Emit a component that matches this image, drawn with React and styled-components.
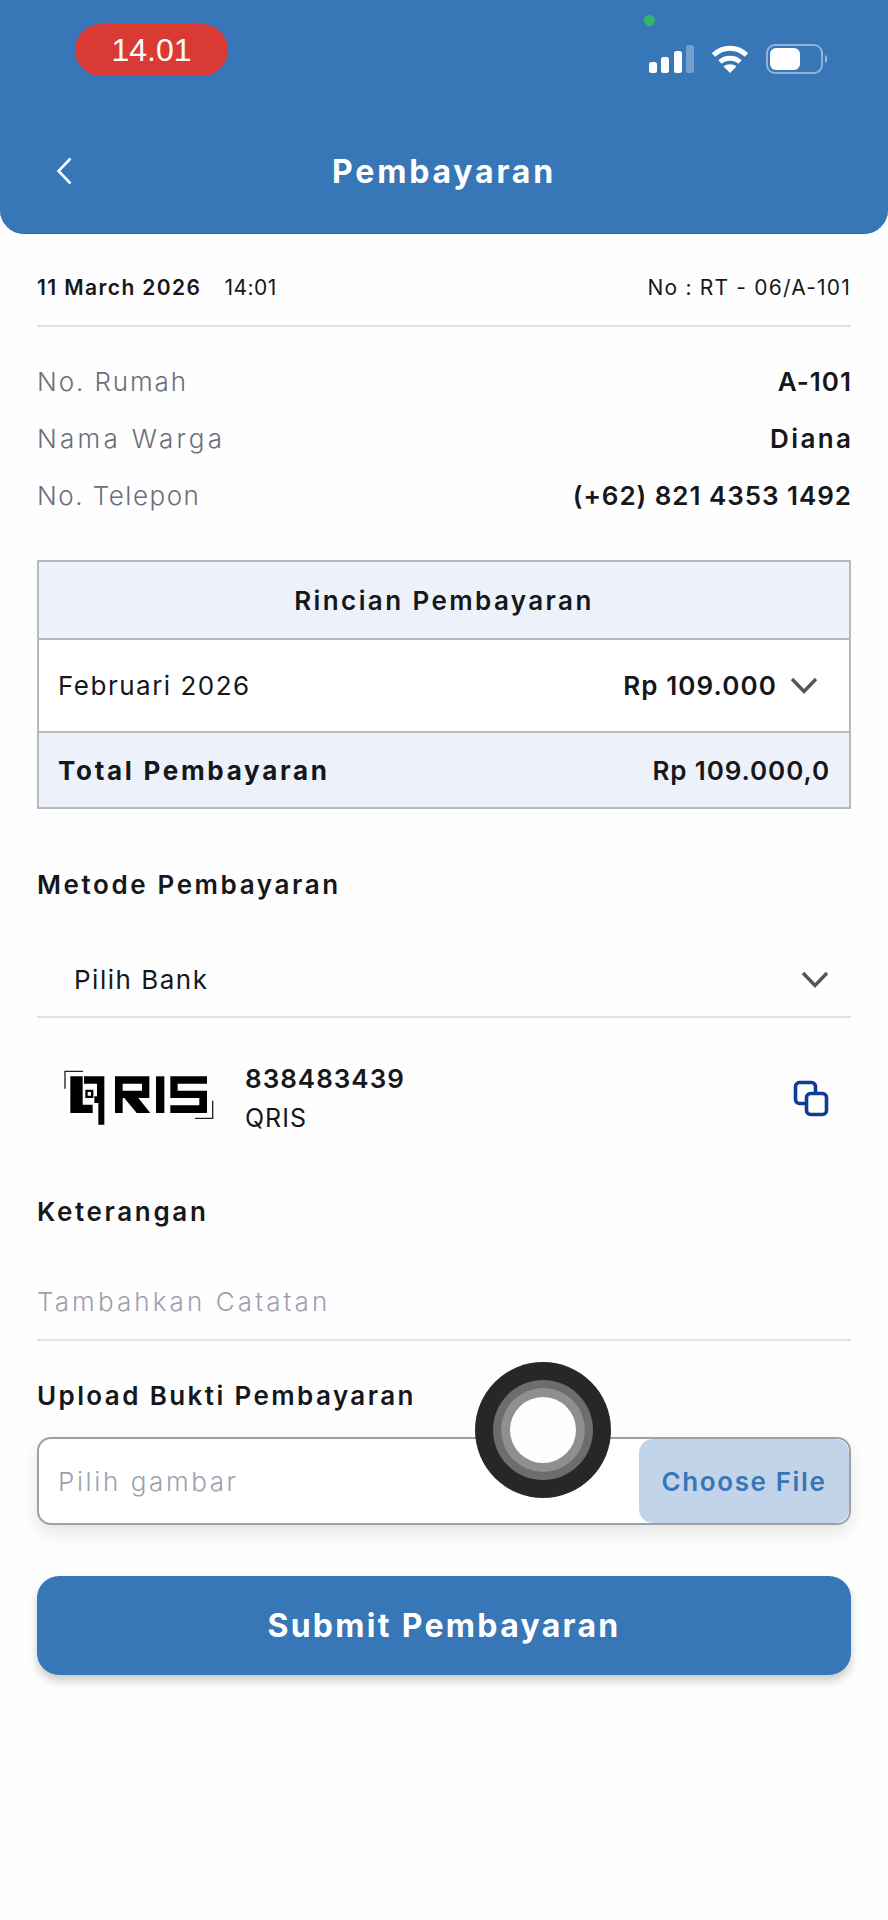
import React from 'react'
import styled, { createGlobalStyle } from 'styled-components'

const GlobalStyle = createGlobalStyle`
  html, body {
    margin: 0;
    padding: 0;
    background: #fefefe;
  }
  * {
    box-sizing: border-box;
  }
`

const Page = styled.div`
  position: relative;
  width: 888px;
  min-height: 1920px;
  background: #fefefe;
  color: #16171b;
  font-family: Inter, 'Noto Sans', sans-serif;
  overflow: hidden;
`

const Header = styled.header`
  position: relative;
  height: 234px;
  padding-top: 24px;
  background: #3776b7;
  border-bottom: 1px solid #1f6cb4;
  border-radius: 0 0 24px 24px;
  color: #fff;
`

const StatusBar = styled.div`
  display: flex;
  justify-content: space-between;
  align-items: flex-start;
  height: 52px;
  padding: 0 59px 0 75px;
`

const TimePill = styled.div`
  width: 153px;
  height: 52px;
  border-radius: 26px;
  background: #da3a34;
  display: flex;
  align-items: center;
  justify-content: center;
  font-family: 'Liberation Sans', Arial, sans-serif;
  font-size: 32px;
`

const StatusIcons = styled.div`
  display: flex;
  gap: 17px;
  margin-top: 20px;
`

const CameraDot = styled.span`
  position: absolute;
  left: 644px;
  top: 15px;
  width: 11px;
  height: 11px;
  border-radius: 50%;
  background: #34b56b;
`

const TitleRow = styled.div`
  display: grid;
  grid-template-columns: 1fr auto 1fr;
  align-items: center;
  height: 48px;
  margin-top: 71px;
`

const BackSlot = styled.div`
  display: flex;
  padding-left: 56px;
`

const Title = styled.h1`
  margin: 0;
  font-size: 32px;
  font-weight: 700;
  letter-spacing: 2.8px;
`

const Main = styled.main`
  padding: 0 37px;
`

const DateRow = styled.div`
  display: flex;
  align-items: center;
  height: 58px;
  margin-top: 35px;
  padding-bottom: 19px;
  border-bottom: 2px solid #e2e2e6;
  font-size: 21px;
`

const DateText = styled.span`
  font-weight: 600;
  letter-spacing: 1.4px;
  margin-right: 23px;
`

const TimeText = styled.span`
  letter-spacing: 0.5px;
`

const ReceiptNo = styled.span`
  margin-left: auto;
  letter-spacing: 1.2px;
`

const InfoList = styled.div`
  margin-top: 26px;
`

const InfoRow = styled.div`
  display: flex;
  justify-content: space-between;
  align-items: center;
  height: 57px;
  font-size: 26px;
`

const InfoLabel = styled.span`
  color: #6b6e7a;
  font-weight: 300;
  letter-spacing: ${(p) => p.$track}px;
`

const InfoValue = styled.span`
  font-weight: 600;
  letter-spacing: ${(p) => p.$track}px;
  margin-right: -${(p) => p.$track}px;
`

const Table = styled.section`
  margin-top: 36px;
  border: 2px solid #b9b9bd;
  font-size: 26px;
`

const TableRow = styled.div`
  display: flex;
  align-items: center;
  justify-content: ${(p) => (p.$center ? 'center' : 'space-between')};
  height: ${(p) => p.$height}px;
  padding: 0 19px;
  background: ${(p) => (p.$tinted ? '#edf2fa' : '#fff')};
  border-top: ${(p) => (p.$first ? 'none' : '2px solid #b9b9bd')};
`

const TableHeading = styled.span`
  font-weight: 600;
  letter-spacing: 2.4px;
`

const MonthLabel = styled.span`
  letter-spacing: 1.5px;
`

const Amount = styled.span`
  display: flex;
  align-items: center;
  gap: 13px;
  margin-right: 12px;
  font-weight: 600;
  letter-spacing: 1.1px;
`

const TotalLabel = styled.span`
  font-weight: 700;
  letter-spacing: 2.7px;
`

const TotalValue = styled.span`
  font-weight: 600;
  letter-spacing: 0.9px;
`

const SectionTitle = styled.h2`
  display: flex;
  align-items: center;
  height: 36px;
  margin: ${(p) => p.$top}px 0 0;
  font-size: 26px;
  font-weight: 600;
  letter-spacing: ${(p) => p.$track}px;
`

const SelectRow = styled.div`
  display: flex;
  justify-content: space-between;
  align-items: center;
  height: 74px;
  margin-top: 42px;
  padding: 0 22px 2px 37px;
  border-bottom: 2px solid #e2e2e6;
  font-size: 26px;
  letter-spacing: 1.5px;
`

const BankRow = styled.div`
  display: flex;
  align-items: center;
  height: 78px;
  margin-top: 41px;
  padding: 0 22px 0 26px;
`

const BankText = styled.div`
  margin-left: 30px;
  flex: 1;
`

const BankNumber = styled.div`
  height: 39px;
  line-height: 39px;
  font-size: 26px;
  font-weight: 600;
  letter-spacing: 1px;
`

const BankName = styled.div`
  height: 39px;
  line-height: 41px;
  font-size: 25px;
  letter-spacing: 1px;
`

const NoteField = styled.div`
  display: flex;
  align-items: center;
  height: 75px;
  margin-top: 37px;
  padding-bottom: 3px;
  border-bottom: 2px solid #e2e2e6;
  color: #9ea1ad;
  font-size: 26px;
  font-weight: 300;
  letter-spacing: 3.1px;
`

const UploadBox = styled.div`
  display: flex;
  justify-content: space-between;
  align-items: center;
  height: 88px;
  margin-top: 24px;
  padding-left: 19px;
  border: 2px solid #a0a0a4;
  border-radius: 14px;
  background: #fff;
  box-shadow: 0 8px 18px rgba(0, 0, 0, 0.1);
  color: #9ea1ad;
  font-size: 26px;
  font-weight: 300;
  letter-spacing: 2.6px;
`

const ChooseFile = styled.div`
  display: flex;
  align-items: center;
  justify-content: center;
  width: 210px;
  height: 100%;
  border-radius: 14px;
  background: #c2d4e9;
  color: #3776b7;
  font-weight: 600;
  letter-spacing: 1.6px;
`

const SubmitButton = styled.button`
  display: block;
  width: 100%;
  height: 99px;
  margin-top: 51px;
  border: none;
  border-radius: 22px;
  background: #3776b7;
  box-shadow: 0 6px 10px rgba(0, 0, 0, 0.2);
  color: #fff;
  font-family: inherit;
  font-size: 32px;
  font-weight: 700;
  letter-spacing: 2.3px;
`

const TouchButton = styled.div`
  position: absolute;
  left: 475px;
  top: 1362px;
  width: 136px;
  height: 136px;
  border-radius: 50%;
  background: #282629;
  display: flex;
  align-items: center;
  justify-content: center;
`

const TouchRing = styled.div`
  width: ${(p) => p.$size}px;
  height: ${(p) => p.$size}px;
  border-radius: 50%;
  background: ${(p) => p.$color};
  display: flex;
  align-items: center;
  justify-content: center;
`

const SignalIcon = () => (
  <svg width="45" height="29" viewBox="0 0 45 29" fill="#fff">
    <rect x="0" y="18" width="8" height="11" rx="2.5" />
    <rect x="12" y="13" width="8" height="16" rx="2.5" />
    <rect x="25" y="7" width="8" height="22" rx="2.5" />
    <rect x="37" y="1" width="8" height="28" rx="2.5" fillOpacity="0.3" />
  </svg>
)

const WifiIcon = () => (
  <svg width="38" height="29" viewBox="0 0 38 29" fill="none">
    <path d="M2.5 11C12 2 26 2 35.5 11" stroke="#fff" strokeWidth="5" />
    <path d="M9 18C14.500 13 23.500 13 29 18" stroke="#fff" strokeWidth="5" />
    <path d="M19 29L12.500 22.500C16 19.500 22 19.500 25.500 22.500Z" fill="#fff" />
  </svg>
)

const BatteryIcon = () => (
  <svg width="63" height="30" viewBox="0 0 63 30" fill="none">
    <rect x="1" y="1" width="55" height="28" rx="8" stroke="#fff" strokeOpacity="0.45" strokeWidth="2" />
    <rect x="4" y="4" width="30" height="22" rx="6" fill="#fff" />
    <path d="M59 11C62 12 62 18 59 19Z" fill="#fff" fillOpacity="0.5" />
  </svg>
)

const BackIcon = () => (
  <svg width="16" height="28" viewBox="0 0 16 28" fill="none">
    <path d="M14.500 1.500L2.500 14L14.500 26.500" stroke="#fff" strokeWidth="2.600" />
  </svg>
)

const Chevron = () => (
  <svg width="28" height="17" viewBox="0 0 28 17" fill="none">
    <path d="M2 2L14 14.500L26 2" stroke="#55565c" strokeWidth="3.400" />
  </svg>
)

const QrisLogo = () => (
  <svg width="152" height="58" viewBox="66 63 456 174" fill="#000">
    <path d="M72 122V70H126" fill="none" stroke="#222" strokeWidth="4" />
    <path d="M515 158V211H462" fill="none" stroke="#222" strokeWidth="4" />
    <path d="M88 85H125V170H155V195H88Z" />
    <path d="M129 85H190V230H172V165H160V145H168V107H129Z" />
    <path d="M133 125H157V150H133ZM140 132V143H150V132Z" fillRule="evenodd" />
    <path d="M222 85H325V150H292L328 195H287L250 150H245V195H222ZM245 107V128H303V107Z" fillRule="evenodd" />
    <rect x="345" y="85" width="25" height="110" />
    <path d="M388 85H498V107H410V128H498V195H388V172H475V150H388Z" />
  </svg>
)

const CopyIcon = () => (
  <svg width="36" height="37" viewBox="0 0 36 37" fill="none" stroke="#0f3c96" strokeWidth="3.600">
    <rect x="2.500" y="2.500" width="20" height="21" rx="4" />
    <rect x="13.500" y="13.500" width="20" height="21" rx="4" fill="#fefefe" />
  </svg>
)

export default function App() {
  return (
    <Page>
      <GlobalStyle />
      <Header>
        <CameraDot />
        <StatusBar>
          <TimePill>14.01</TimePill>
          <StatusIcons>
            <SignalIcon />
            <WifiIcon />
            <BatteryIcon />
          </StatusIcons>
        </StatusBar>
        <TitleRow>
          <BackSlot>
            <BackIcon />
          </BackSlot>
          <Title>Pembayaran</Title>
        </TitleRow>
      </Header>

      <Main>
        <DateRow>
          <DateText>11 March 2026</DateText>
          <TimeText>14:01</TimeText>
          <ReceiptNo>No : RT - 06/A-101</ReceiptNo>
        </DateRow>

        <InfoList>
          <InfoRow>
            <InfoLabel $track={1.9}>No. Rumah</InfoLabel>
            <InfoValue $track={1}>A-101</InfoValue>
          </InfoRow>
          <InfoRow>
            <InfoLabel $track={3.3}>Nama Warga</InfoLabel>
            <InfoValue $track={2.4}>Diana</InfoValue>
          </InfoRow>
          <InfoRow>
            <InfoLabel $track={1.5}>No. Telepon</InfoLabel>
            <InfoValue $track={0.95}>(+62) 821 4353 1492</InfoValue>
          </InfoRow>
        </InfoList>

        <Table>
          <TableRow $first $tinted $center $height={76}>
            <TableHeading>Rincian Pembayaran</TableHeading>
          </TableRow>
          <TableRow $height={93}>
            <MonthLabel>Februari 2026</MonthLabel>
            <Amount>
              Rp 109.000
              <Chevron />
            </Amount>
          </TableRow>
          <TableRow $tinted $height={76}>
            <TotalLabel>Total Pembayaran</TotalLabel>
            <TotalValue>Rp 109.000,0</TotalValue>
          </TableRow>
        </Table>

        <SectionTitle $top={57} $track={2.6}>Metode Pembayaran</SectionTitle>
        <SelectRow>
          <span>Pilih Bank</span>
          <Chevron />
        </SelectRow>

        <BankRow>
          <QrisLogo />
          <BankText>
            <BankNumber>838483439</BankNumber>
            <BankName>QRIS</BankName>
          </BankText>
          <CopyIcon />
        </BankRow>

        <SectionTitle $top={56} $track={2.65}>Keterangan</SectionTitle>
        <NoteField>Tambahkan Catatan</NoteField>

        <SectionTitle $top={36} $track={2.4}>Upload Bukti Pembayaran</SectionTitle>
        <UploadBox>
          <span>Pilih gambar</span>
          <ChooseFile>Choose File</ChooseFile>
        </UploadBox>

        <SubmitButton>Submit Pembayaran</SubmitButton>
      </Main>

      <TouchButton>
        <TouchRing $size={100} $color="#6d6c6f">
          <TouchRing $size={84} $color="#8f8e91">
            <TouchRing $size={66} $color="#fefefe" />
          </TouchRing>
        </TouchRing>
      </TouchButton>
    </Page>
  )
}
